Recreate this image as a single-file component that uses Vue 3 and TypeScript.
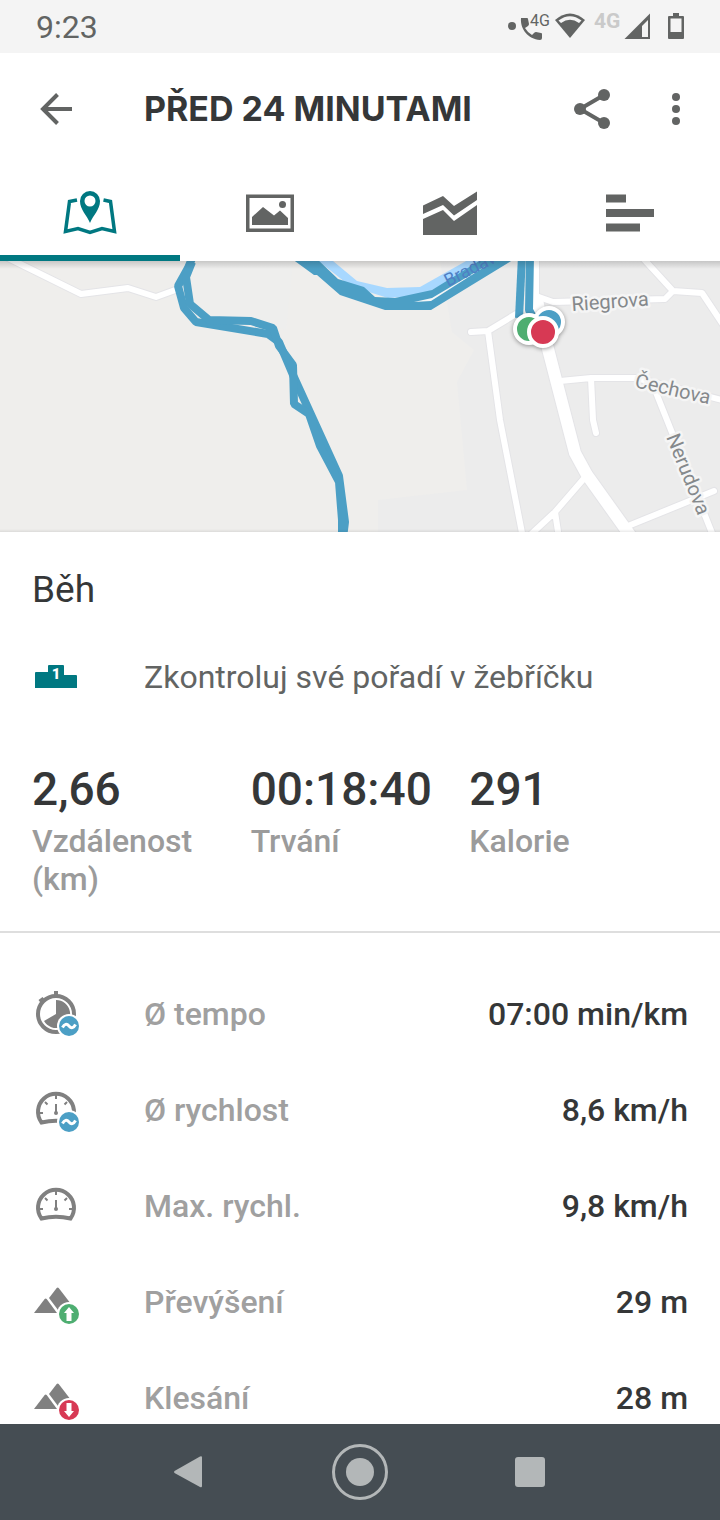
<script setup lang="ts">
import { ref } from 'vue'

interface Tab {
  id: string
  label: string
}

interface Stat {
  value: string
  label: string
}

interface Metric {
  icon: 'pace' | 'speed' | 'mountain'
  badge: 'avg' | 'up' | 'down' | null
  label: string
  value: string
}

const tabs: Tab[] = [
  { id: 'map', label: 'Mapa' },
  { id: 'photos', label: 'Fotky' },
  { id: 'charts', label: 'Grafy' },
  { id: 'splits', label: 'Mezičasy' },
]

const activeTab = ref('map')

const stats: Stat[] = [
  { value: '2,66', label: 'Vzdálenost (km)' },
  { value: '00:18:40', label: 'Trvání' },
  { value: '291', label: 'Kalorie' },
]

const metrics: Metric[] = [
  { icon: 'pace', badge: 'avg', label: 'Ø tempo', value: '07:00 min/km' },
  { icon: 'speed', badge: 'avg', label: 'Ø rychlost', value: '8,6 km/h' },
  { icon: 'speed', badge: null, label: 'Max. rychl.', value: '9,8 km/h' },
  { icon: 'mountain', badge: 'up', label: 'Převýšení', value: '29 m' },
  { icon: 'mountain', badge: 'down', label: 'Klesání', value: '28 m' },
]
</script>

<template>
  <div class="screen">
    <div class="status">
      <span class="clock">9:23</span>
      <svg class="status-icons" viewBox="500 0 192 53" aria-hidden="true">
        <circle cx="512" cy="26" r="4" fill="#626463" />
        <path d="M521 18h6q1 0 1 1l1 5q0 1-1 2l-3 2q3 5 7 7l2-2q1-1 2-1l5 1q1 0 1 1v4q0 2-2 2C528 39 520 29 521 18Z" fill="#626463" />
        <text x="530" y="26" class="net-small">4G</text>
        <path d="M555 20Q570 7 585 20L570 38Z" fill="#626463" />
        <path d="M558.500 20.500Q570 12 581.500 20.500L579 23Q570 16.500 561 23Z" fill="#f4f4f4" />
        <text x="594" y="28" class="net-dim">4G</text>
        <path d="M650 13.500V39H624.500Z" fill="#626463" />
        <path d="M648 20V37H642V26Z" fill="#f4f4f4" />
        <path d="M673 13h6v3h4q1 0 1 1v21q0 1-1 1h-14q-1 0-1-1V17q0-1 1-1h4Z" fill="#626463" />
        <path d="M670.500 18.500h11V32h-11Z" fill="#f4f4f4" />
      </svg>
    </div>

    <header class="toolbar">
      <button class="icon-btn" type="button" aria-label="Zpět">
        <svg width="48" height="48" viewBox="0 0 48 48" fill="none" stroke="#626463" stroke-width="4">
          <path d="M48 24H19M33.500 9.500L19 24l14.500 14.500" />
        </svg>
      </button>
      <h1>PŘED 24 MINUTAMI</h1>
      <button class="icon-btn" type="button" aria-label="Sdílet">
        <svg width="48" height="48" viewBox="0 0 48 48" fill="#626463">
          <path d="M12 24L36 10M12 24l24 14" stroke="#626463" stroke-width="4" />
          <circle cx="12" cy="24" r="6" />
          <circle cx="36" cy="10" r="6" />
          <circle cx="36" cy="38" r="6" />
        </svg>
      </button>
      <button class="icon-btn more" type="button" aria-label="Další možnosti">
        <svg width="48" height="48" viewBox="0 0 48 48" fill="#626463">
          <circle cx="24" cy="12" r="4" />
          <circle cx="24" cy="24" r="4" />
          <circle cx="24" cy="36" r="4" />
        </svg>
      </button>
    </header>

    <nav class="tabs">
      <button
        v-for="tab in tabs"
        :key="tab.id"
        class="tab"
        :class="{ active: tab.id === activeTab }"
        type="button"
        :aria-label="tab.label"
        @click="activeTab = tab.id"
      >
        <svg width="60" height="60" viewBox="0 0 60 60" fill="currentColor">
          <template v-if="tab.id === 'map'">
            <path d="M17 15L9.500 16.500L5.500 46.500L18 43.500L30 47.500L42 43.500L54.500 46.500L50.500 16.500L43.500 15" fill="none" stroke="currentColor" stroke-width="3.500" />
            <path d="M30 38C27 30 20 25 20 16a10 10 0 0 1 20 0C40 25 33 30 30 38ZM30 10.500a5.500 5.500 0 1 0 0 11a5.500 5.500 0 0 0 0-11Z" fill-rule="evenodd" />
          </template>
          <template v-else-if="tab.id === 'photos'">
            <path d="M6 9.500h48v37.500H6ZM9.500 13v30.500h41V13Z" fill-rule="evenodd" />
            <path d="M12 40V32l11-10L34 30.500l6-5 8 7.500v7Z" />
            <circle cx="42.500" cy="19.500" r="3.500" />
          </template>
          <template v-else-if="tab.id === 'charts'">
            <path d="M3 20.500L23 11l11 10L57 6.500V15L34 30.500L23 20L3 29Z" />
            <path d="M3 34L23 25l11 11L57 20V50H3Z" />
          </template>
          <template v-else>
            <path d="M6 9.500h20v8H6ZM6 24h48v8H6ZM6 38.500h34v8H6Z" />
          </template>
        </svg>
      </button>
    </nav>

    <main class="content">
      <div class="map">
        <svg viewBox="0 261 720 271" preserveAspectRatio="xMidYMid slice" role="img" aria-label="Trasa běhu">
          <rect x="0" y="261" width="720" height="271" fill="#efeeec" />
          <path d="M198 261H293L286 330L270 325L202 318L189 304L186 276Z" fill="#eeeeed" />
          <path d="M440 261H720V532H378V500L467 490L457 382L474 350L452 332Z" fill="#ececec" />
          <g class="roads outline">
            <path d="M4 256L81 294L128 288L156 297L178 289" stroke-width="8" />
            <path d="M536 258V296L553 302L665 299L673 291L702 293L724 326M641 256L673 291M471 332L488 331L516 314M488 331L500 420L523 538M560 381L591 378H636L722 400M591 378L593 420L596 433M655 390L714 538M714 491L628 526M587 475L555 512L527 538M555 512L559 538" stroke-width="8" />
            <path d="M537 300L547 345L575 453L587 475L632 538" stroke-width="14" />
          </g>
          <g class="roads">
            <path d="M4 256L81 294L128 288L156 297L178 289" stroke-width="6" />
            <path d="M536 258V296L553 302L665 299L673 291L702 293L724 326M641 256L673 291M471 332L488 331L516 314M488 331L500 420L523 538M560 381L591 378H636L722 400M591 378L593 420L596 433M655 390L714 538M714 491L628 526M587 475L555 512L527 538M555 512L559 538" stroke-width="6" />
            <path d="M537 300L547 345L575 453L587 475L632 538" stroke-width="12" />
          </g>
          <path d="M312 256H327L357 281L387 288L420 287L475 256H500L420 296L388 298L372 293L345 282Z" fill="#a8d8ff" />
          <path d="M288 256L314 275H317L340 295L385 310H431L516 258H484L432 290L395 298L375 297L364 287L338 279L314 256Z" fill="#4c9fc5" />
          <path d="M414 302L432 298L489 264L431 301Z" fill="#f4f6f7" />
          <g class="track">
            <path d="M193 256L188 268L178 286L184 308L196 322L268 334L279 342L293 375L339 476L345 522L343 538" />
            <path d="M192 262L186 277L190 304L209 320L251 321L273 328L279 346L293 365L294 404L309 414L320 446L339 482L342 520V538" />
            <path d="M522 256L519 318" />
            <path d="M530 256L529 310L540 330" />
          </g>
          <text transform="translate(448 287) rotate(-27)" class="river-label">Bradava</text>
          <g class="street">
            <text transform="translate(572 311) rotate(-4)">Riegrova</text>
            <text transform="translate(634 387) rotate(13)">Čechova</text>
            <text transform="translate(666 437) rotate(68)">Nerudova</text>
          </g>
          <g class="pins">
            <circle cx="549" cy="322" r="14" fill="#4c9fc5" />
            <circle cx="529" cy="329" r="14" fill="#4eae71" />
            <circle cx="543" cy="332" r="14" fill="#d73954" />
          </g>
        </svg>
      </div>

      <h2>Běh</h2>

      <a class="leaderboard" href="#">
        <svg width="48" height="48" viewBox="0 0 48 48" fill="#007881" aria-hidden="true">
          <path d="M3 35V20q0-1 1-1H16V13q0-1 1-1H31q1 0 1 1v9H44q1 0 1 1V35Z" />
          <text x="24" y="26" class="podium">1</text>
        </svg>
        <span>Zkontroluj své pořadí v žebříčku</span>
      </a>

      <dl class="stats">
        <div v-for="stat in stats" :key="stat.label" class="stat">
          <dt>{{ stat.label }}</dt>
          <dd>{{ stat.value }}</dd>
        </div>
      </dl>

      <dl class="metrics">
        <div v-for="metric in metrics" :key="metric.label" class="metric">
          <svg width="48" height="48" viewBox="0 0 48 48" fill="#808080" aria-hidden="true">
            <template v-if="metric.icon === 'pace'">
              <circle cx="24" cy="24" r="18" fill="none" stroke="#808080" stroke-width="4" />
              <path d="M22 1h4v5h-4ZM6.500 10l4-3 3 3-4 4Z" />
              <path d="M24 24V10a14 14 0 1 1-12 21Z" />
            </template>
            <template v-else-if="metric.icon === 'speed'">
              <path d="M9.500 36.500A18 18 0 1 1 38.500 36.500Q24 33 9.500 36.500Z" fill="none" stroke="#808080" stroke-width="4" />
              <path d="M24 8v5M7 27h4M37 27h4M13 16l2.500 2.500M35 16l-2.500 2.500M24 18v9" stroke="#808080" stroke-width="2" />
              <circle cx="24" cy="27" r="2" />
            </template>
            <template v-else>
              <path d="M2 35L12.700 21q1-1 2 0L25 35Z" />
              <path d="M17 20L24.700 10q1-1 2 0L39 26 26 32Z" />
            </template>
            <template v-if="metric.badge === 'avg'">
              <circle cx="37" cy="36" r="12" fill="#fff" />
              <circle cx="37" cy="36" r="10" fill="#4c9fc5" />
              <path d="M30.500 37.500Q33.500 32 37 36T43.500 34.500" fill="none" stroke="#fff" stroke-width="3" />
            </template>
            <template v-if="metric.badge === 'up'">
              <circle cx="37" cy="36" r="12" fill="#fff" />
              <circle cx="37" cy="36" r="10" fill="#4eae71" />
              <path d="M37 29L42 35H39.500V43H34.500V35H32Z" fill="#fff" />
            </template>
            <template v-if="metric.badge === 'down'">
              <circle cx="37" cy="36" r="12" fill="#fff" />
              <circle cx="37" cy="36" r="10" fill="#d73954" />
              <path d="M37 43L42 37H39.500V29H34.500V37H32Z" fill="#fff" />
            </template>
          </svg>
          <dt>{{ metric.label }}</dt>
          <dd>{{ metric.value }}</dd>
        </div>
      </dl>
    </main>

    <footer class="system-nav">
      <button type="button" aria-label="Zpět">
        <svg width="60" height="60" viewBox="0 0 60 60" fill="#b3b7b8">
          <path d="M5.500 29L31 14.500q2-1 2 1V44q0 2-2 1L5.500 31q-1-1 0-2Z" />
        </svg>
      </button>
      <button type="button" aria-label="Domů">
        <svg width="60" height="60" viewBox="0 0 60 60" fill="#b3b7b8">
          <circle cx="30" cy="30" r="26.500" fill="none" stroke="#b3b7b8" stroke-width="3" />
          <circle cx="30" cy="30" r="14" />
        </svg>
      </button>
      <button type="button" aria-label="Přehled">
        <svg width="60" height="60" viewBox="0 0 60 60" fill="#b3b7b8">
          <rect x="24" y="15" width="30" height="30" rx="3" />
        </svg>
      </button>
    </footer>
  </div>
</template>

<style>
body {
  margin: 0;
  background: #fff;
}
</style>

<style scoped>
.screen {
  display: flex;
  flex-direction: column;
  height: 100vh;
  overflow: hidden;
  background: #fff;
  color: #353738;
  font-family: Roboto, 'Noto Sans', sans-serif;
}

button {
  display: flex;
  align-items: center;
  justify-content: center;
  margin: 0;
  padding: 0;
  border: 0;
  background: none;
  cursor: pointer;
}

svg {
  display: block;
  flex: none;
}

.status {
  display: flex;
  flex: none;
  align-items: center;
  justify-content: space-between;
  height: 53px;
  padding: 0 28px 0 36px;
  background: #f4f4f4;
}

.clock {
  color: #626463;
  font-size: 32px;
  line-height: 54px;
}

.status-icons {
  width: 192px;
  height: 53px;
}

.net-small {
  fill: #626463;
  font-size: 16px;
}

.net-dim {
  fill: #cacaca;
  font-size: 21px;
  font-weight: 700;
}

.toolbar {
  display: flex;
  flex: none;
  align-items: center;
  height: 112px;
  padding: 0 20px 0 24px;
}

.icon-btn {
  flex: none;
  width: 48px;
  height: 48px;
}

.more {
  margin-left: 36px;
}

h1 {
  flex: 1;
  margin: 0 0 0 72px;
  font-family: Inter, sans-serif;
  font-size: 34px;
  font-weight: 700;
  line-height: 48px;
  white-space: nowrap;
}

.tabs {
  display: grid;
  flex: none;
  grid-template-columns: repeat(4, 1fr);
  height: 96px;
}

.tab {
  border-bottom: 6px solid transparent;
  padding-top: 10px;
  color: #626463;
}

.tab.active {
  border-bottom-color: #007881;
  color: #007881;
}

.content {
  flex: 1;
  min-height: 0;
  overflow-y: auto;
  scrollbar-width: none;
}

.map {
  position: relative;
  height: 271px;
}

.map::after {
  position: absolute;
  inset: 0;
  background:
    linear-gradient(rgba(0, 0, 0, 0.16), rgba(0, 0, 0, 0) 8px),
    linear-gradient(to top, rgba(0, 0, 0, 0.08), rgba(0, 0, 0, 0) 3px);
  content: '';
  pointer-events: none;
}

.map svg {
  width: 100%;
  height: 100%;
}

.roads {
  fill: none;
  stroke: #fff;
  stroke-linecap: round;
  stroke-linejoin: round;
}

.roads.outline {
  stroke: #e4e4e7;
}

.track {
  fill: none;
  stroke: #4c9fc5;
  stroke-width: 8px;
  stroke-linejoin: bevel;
}

.river-label {
  fill: #4f7fc4;
  font-size: 18px;
}

.street {
  fill: #85898c;
  stroke: #f5f5f5;
  stroke-width: 5px;
  stroke-linejoin: round;
  paint-order: stroke;
  font-size: 20px;
}

.pins {
  stroke: #fff;
  stroke-width: 4px;
  filter: drop-shadow(0 1px 2px rgba(0, 0, 0, 0.4));
}

h2 {
  margin: 32px 32px 0;
  font-size: 37px;
  font-weight: 400;
  line-height: 52px;
}

.leaderboard {
  display: flex;
  align-items: center;
  gap: 64px;
  height: 96px;
  margin-top: 13px;
  padding: 0 32px;
  color: #626463;
  font-size: 32px;
  text-decoration: none;
}

.podium {
  fill: #fff;
  font-size: 15px;
  font-weight: 900;
  text-anchor: middle;
}

.stats {
  display: grid;
  grid-template-columns: repeat(3, 1fr);
  margin: 0;
  padding: 36px 32px 33px;
  border-bottom: 2px solid #dedede;
}

.stat {
  display: flex;
  flex-direction: column-reverse;
  justify-content: flex-end;
}

.stat dd {
  margin: 0;
  font-size: 46px;
  font-weight: 500;
  line-height: 56px;
}

.stat dt {
  margin-top: 5px;
  padding-right: 32px;
  color: #9b9b9b;
  font-size: 32px;
  font-weight: 500;
  line-height: 38px;
}

.metrics {
  margin: 0;
  padding-top: 33px;
}

.metric {
  display: flex;
  align-items: center;
  height: 96px;
  padding: 0 32px;
  font-size: 32px;
  font-weight: 500;
}

.metric dt {
  margin-left: 64px;
  color: #a0a0a0;
}

.metric dd {
  margin: 0 0 0 auto;
}

.system-nav {
  display: flex;
  flex: none;
  align-items: center;
  justify-content: center;
  gap: 14%;
  height: 96px;
  background: #454d53;
}

.system-nav button {
  width: 60px;
  height: 60px;
}
</style>
